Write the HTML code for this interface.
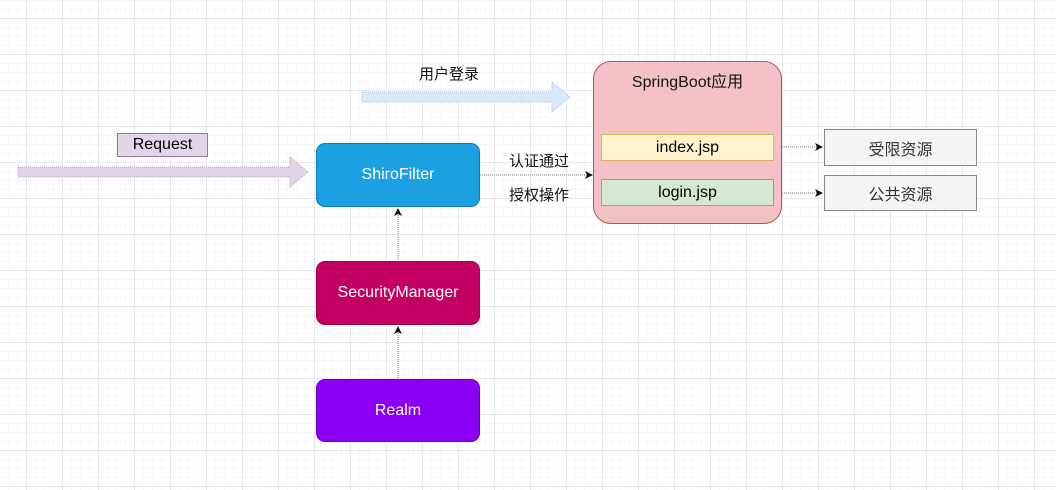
<!DOCTYPE html>
<html><head><meta charset="utf-8"><style>
body{margin:0;width:1056px;height:490px;overflow:hidden;font-family:"Liberation Sans","Noto Sans CJK SC",sans-serif;
background-color:#fff;
background-image:linear-gradient(#e8e8e8 1px,transparent 1px),linear-gradient(90deg,#e8e8e8 1px,transparent 1px),linear-gradient(#f7f7f7 1px,transparent 1px),linear-gradient(90deg,#f7f7f7 1px,transparent 1px);
background-size:36px 36px,36px 36px,9px 9px,9px 9px;background-position:26px 18px,26px 18px,26px 18px,26px 18px;}
.b{position:absolute;display:flex;align-items:center;justify-content:center;box-sizing:border-box;font-size:16px;}
.t{position:absolute;font-size:15px;color:#111;}
</style></head><body>
<svg width="1056" height="490" style="position:absolute;left:0;top:0">
<defs><marker id="m" markerWidth="8" markerHeight="8" refX="7" refY="4" orient="auto"><path d="M0,0 L8,4 L0,8 L2,4 Z" fill="#111"/></marker></defs>
<path d="M18,167 H290 V157 L308,172 L290,187 V177 H18 Z" fill="#e1d5e7" stroke="#b9a3c3" stroke-dasharray="1,1"/>
<path d="M362,92 H552 V82 L570,97 L552,112 V102 H362 Z" fill="#dae8fc" stroke="#a8bfd8" stroke-dasharray="1,1"/>
<line x1="480" y1="175" x2="592" y2="175" stroke="#777" stroke-dasharray="1,1" marker-end="url(#m)"/>
<line x1="398" y1="260" x2="398" y2="209" stroke="#777" stroke-dasharray="1,1" marker-end="url(#m)"/>
<line x1="398" y1="378" x2="398" y2="327" stroke="#777" stroke-dasharray="1,1" marker-end="url(#m)"/>
<line x1="774" y1="147" x2="822" y2="147" stroke="#777" stroke-dasharray="1,1" marker-end="url(#m)"/>
<line x1="774" y1="193" x2="822" y2="193" stroke="#777" stroke-dasharray="1,1" marker-end="url(#m)"/>
</svg>
<div class="b" style="left:117px;top:133px;width:91px;height:24px;background:#e1d5e7;border:1px solid #9673a6;">Request</div>
<div class="t" style="left:419px;top:63px;">用户登录</div>
<div class="b" style="left:316px;top:143px;width:164px;height:64px;background:#1ba1e2;border-radius:9px;color:#fff;border:1px solid #0e7ab8">ShiroFilter</div>
<div class="b" style="left:316px;top:261px;width:164px;height:64px;background:#c20060;border-radius:9px;color:#fff;border:1px solid #a0004e">SecurityManager</div>
<div class="b" style="left:316px;top:379px;width:164px;height:63px;background:#8b00f5;border-radius:9px;color:#fff;border:1px solid #7100c7">Realm</div>
<div class="t" style="left:509px;top:150px;">认证通过</div>
<div class="t" style="left:509px;top:184px;">授权操作</div>
<div style="position:absolute;left:593px;top:61px;width:189px;height:163px;box-sizing:border-box;background:#f4c2c6;border:1px solid #b85450;border-radius:18px;"></div>
<div class="t" style="left:593px;top:68px;width:189px;text-align:center;font-size:16px;">SpringBoot应用</div>
<div class="b" style="left:601px;top:134px;width:173px;height:27px;background:#fff2cc;border:1px solid #d6b656;">index.jsp</div>
<div class="b" style="left:601px;top:179px;width:173px;height:27px;background:#d5e8d4;border:1px solid #82b366;">login.jsp</div>
<div class="b" style="left:824px;top:129px;width:153px;height:37px;background:#f5f5f5;border:1px solid #888;color:#333">受限资源</div>
<div class="b" style="left:824px;top:175px;width:153px;height:36px;background:#f5f5f5;border:1px solid #888;color:#333">公共资源</div>
</body></html>
